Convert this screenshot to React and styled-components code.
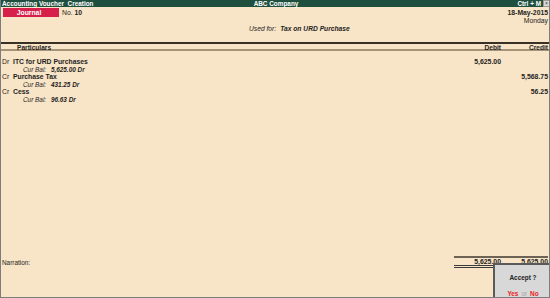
import React from "react";
import styled, { createGlobalStyle } from "styled-components";

const GlobalStyle = createGlobalStyle`
  html, body {
    margin: 0;
    padding: 0;
    background: #f8e4c6;
  }
  body {
    font-family: "Liberation Sans", Arial, sans-serif;
    color: #1e1e1e;
  }
`;

const Window = styled.div`
  position: relative;
  box-sizing: border-box;
  width: 550px;
  height: 298px;
  background: #f8e4c6;
  border-left: 1px solid #7d7d7d;
  border-right: 1px solid #7d7d7d;
  border-bottom: 1px solid #7d7d7d;
  display: flex;
  flex-direction: column;
  overflow: hidden;
`;

const TitleBar = styled.div`
  height: 7px;
  margin-left: -1px;
  margin-right: -1px;
  background: #1f4f3e;
  color: #ffffff;
  font-size: 6.4px;
  font-weight: bold;
  line-height: 7px;
  display: grid;
  grid-template-columns: 1fr auto 1fr;
  padding-left: 2px;
`;

const TitleRight = styled.div`
  display: flex;
  justify-content: flex-end;
  align-items: center;
  gap: 2px;
`;

const CloseBox = styled.div`
  width: 5px;
  height: 5px;
  background: #d9d9d9;
  border: 1px solid #9a9a9a;
  color: #333;
  font-size: 5px;
  font-weight: normal;
  line-height: 5px;
  text-align: center;
  box-sizing: content-box;
`;

const TopSection = styled.div`
  display: flex;
  justify-content: space-between;
  align-items: flex-start;
  padding: 1px 1px 0 2px;
`;

const VoucherType = styled.div`
  display: flex;
  align-items: center;
  gap: 3px;
  font-size: 6.8px;
`;

const Badge = styled.div`
  width: 56px;
  height: 9px;
  background: #d61f4a;
  color: #ffffff;
  font-weight: bold;
  line-height: 9px;
  text-align: center;
  padding-right: 4px;
  box-sizing: border-box;
`;

const DateBlock = styled.div`
  display: flex;
  flex-direction: column;
  align-items: flex-end;
  padding-top: 1px;
  font-size: 6.8px;
  line-height: 8px;
`;

const Bold = styled.span`
  font-weight: bold;
`;

const UsedFor = styled.div`
  line-height: 8px;
  font-size: 6.7px;
  padding-left: 248px;
  span {
    font-style: italic;
    margin-right: 4px;
  }
`;

const Columns = styled.div`
  display: grid;
  grid-template-columns: 1fr 47px 47px;
  padding-right: 1px;
`;

const HeaderRow = styled(Columns)`
  margin-top: 9px;
  border-top: 2px solid #3a3126;
  border-bottom: 2px solid #a69478;
  height: 5px;
  line-height: 5px;
  font-size: 6.6px;
  font-weight: bold;
  overflow: visible;
`;

const HeadCell = styled.div`
  text-align: ${(p) => (p.right ? "right" : "left")};
  padding-left: ${(p) => (p.right ? "0" : "16px")};
  position: relative;
  top: 0.5px;
`;

const Entries = styled.div`
  flex: 1;
  padding-top: 7px;
`;

const EntryLine = styled(Columns)`
  line-height: 7.6px;
  font-size: 6.8px;
`;

const Name = styled.div`
  display: flex;
  padding-left: 1px;
`;

const Side = styled.span`
  width: 11px;
`;

const Amount = styled.div`
  text-align: right;
  font-weight: bold;
  font-size: 6.9px;
`;

const CurBal = styled.div`
  padding-left: 22px;
  font-style: italic;
  font-size: 6.4px;
  b {
    margin-left: 3px;
  }
`;

const Footer = styled(Columns)`
  padding-bottom: 29px;
  align-items: start;
`;

const Narration = styled.div`
  font-size: 6.4px;
  padding-left: 1px;
  padding-top: 3px;
  line-height: 8px;
`;

const TotalsBox = styled.div`
  grid-column: 2 / 4;
  display: grid;
  grid-template-columns: 47px 47px;
  border-top: 2px solid #6d6354;
  border-bottom: 3px double #3a3a3a;
  line-height: 7px;
  height: 7px;
  font-size: 6.9px;
  font-weight: bold;
`;

const Dialog = styled.div`
  position: absolute;
  left: 492px;
  top: 263px;
  width: 58px;
  height: 36px;
  box-sizing: border-box;
  background: #d8d8d8;
  border-top: 2px solid #5a5a5a;
  border-left: 2px solid #5a5a5a;
  display: flex;
  flex-direction: column;
  align-items: center;
  font-size: 6.4px;
`;

const DialogTitle = styled.div`
  margin-top: 9px;
  font-weight: bold;
  color: #222;
`;

const Choices = styled.div`
  margin-top: 9px;
  display: flex;
  gap: 3px;
`;

const Choice = styled.span`
  color: ${(p) => (p.muted ? "#a3a3a3" : "#ec1c24")};
  font-weight: ${(p) => (p.muted ? "normal" : "bold")};
`;

const entries = [
  { side: "Dr", name: "ITC for URD Purchases", bal: "5,625.00 Dr", debit: "5,625.00" },
  { side: "Cr", name: "Purchase Tax", bal: "431.25 Dr", credit: "5,568.75" },
  { side: "Cr", name: "Cess", bal: "96.63 Dr", credit: "56.25" },
];

export default function App() {
  return (
    <>
      <GlobalStyle />
      <Window>
        <TitleBar>
          <span>Accounting Voucher&nbsp; Creation</span>
          <span>ABC Company</span>
          <TitleRight>
            <span>Ctrl + M</span>
            <CloseBox>×</CloseBox>
          </TitleRight>
        </TitleBar>

        <TopSection>
          <VoucherType>
            <Badge>Journal</Badge>
            <span>
              No. <Bold>10</Bold>
            </span>
          </VoucherType>
          <DateBlock>
            <Bold>18-May-2015</Bold>
            <span>Monday</span>
          </DateBlock>
        </TopSection>

        <UsedFor>
          <span>Used for:</span>
          <Bold>Tax on URD Purchase</Bold>
        </UsedFor>

        <HeaderRow>
          <HeadCell>Particulars</HeadCell>
          <HeadCell right>Debit</HeadCell>
          <HeadCell right>Credit</HeadCell>
        </HeaderRow>

        <Entries>
          {entries.map((e) => (
            <div key={e.name}>
              <EntryLine>
                <Name>
                  <Side>{e.side}</Side>
                  <Bold>{e.name}</Bold>
                </Name>
                <Amount>{e.debit || ""}</Amount>
                <Amount>{e.credit || ""}</Amount>
              </EntryLine>
              <EntryLine>
                <CurBal>
                  Cur Bal: <b>{e.bal}</b>
                </CurBal>
              </EntryLine>
            </div>
          ))}
        </Entries>

        <Footer>
          <Narration>Narration:</Narration>
          <TotalsBox>
            <Amount>5,625.00</Amount>
            <Amount>5,625.00</Amount>
          </TotalsBox>
        </Footer>

        <Dialog>
          <DialogTitle>Accept ?</DialogTitle>
          <Choices>
            <Choice>Yes</Choice>
            <Choice muted>or</Choice>
            <Choice>No</Choice>
          </Choices>
        </Dialog>
      </Window>
    </>
  );
}
